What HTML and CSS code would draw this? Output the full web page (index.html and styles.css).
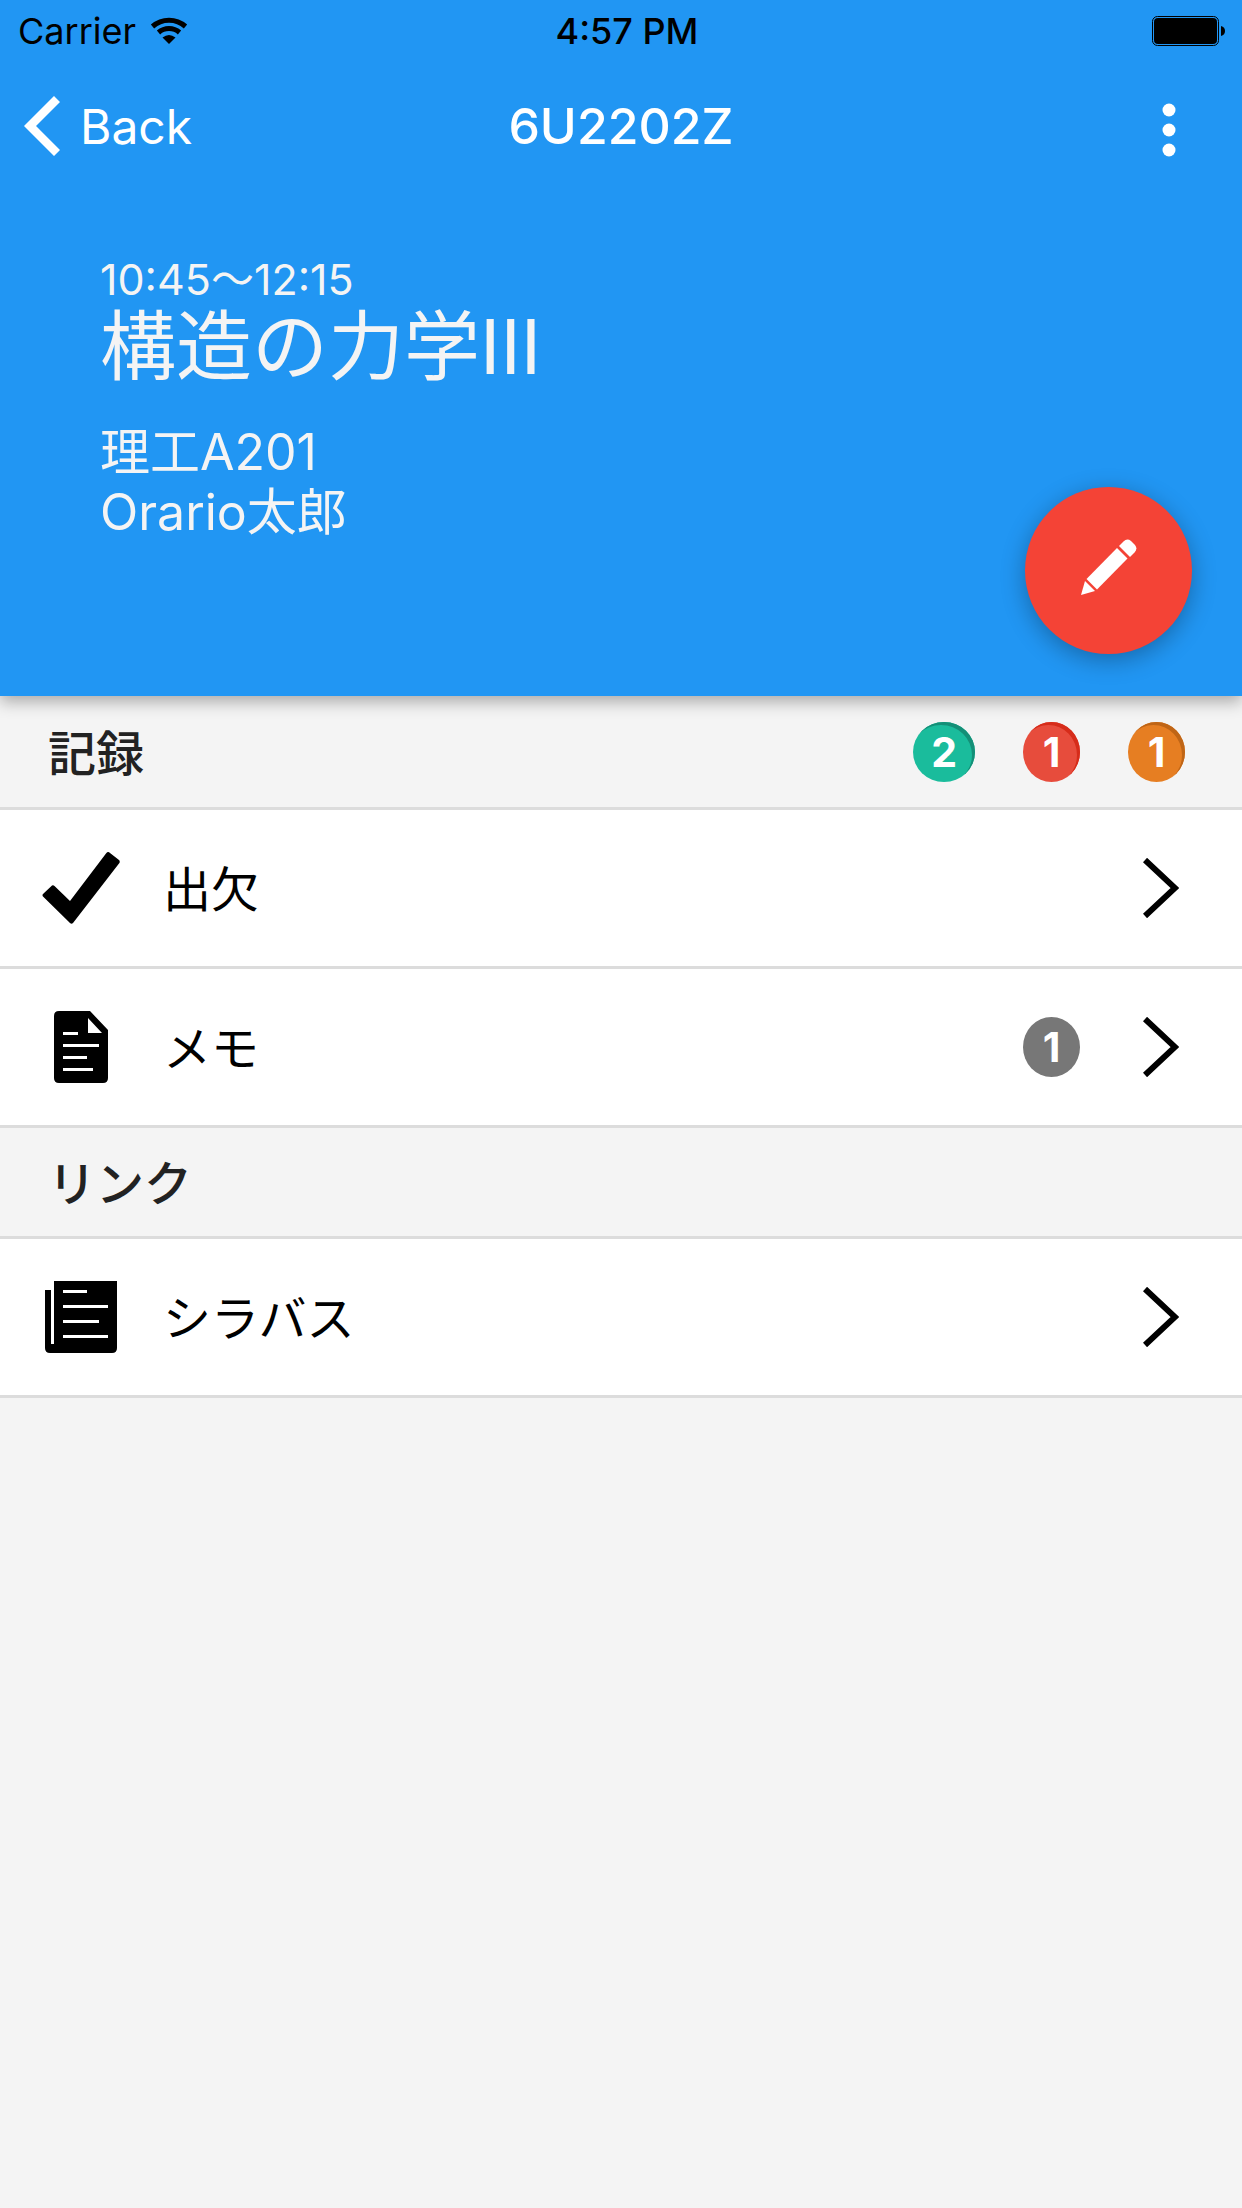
FILE: index.html
```html
<!DOCTYPE html>
<html lang="ja">
<head>
  <meta charset="utf-8">
  <meta name="viewport" content="width=device-width, initial-scale=1">
  <title>6U2202Z</title>
  <link rel="stylesheet" href="styles.css">
</head>
<body>
  <header class="hero">
    <div class="status-bar">
      <div class="carrier">
        <span>Carrier</span>
        <svg class="wifi" viewBox="0 0 38 28" aria-hidden="true">
          <path d="M2.500 9.500A25 25 0 0 1 35.500 9.500M8.500 15.500A16 16 0 0 1 29.500 15.500" fill="none" stroke="currentColor" stroke-width="5"/>
          <path d="M19 27L12.500 20.500Q19 15.500 25.500 20.500Z" fill="currentColor"/>
        </svg>
      </div>
      <span class="clock">4:57 PM</span>
      <svg class="battery" viewBox="0 0 74 30" aria-hidden="true">
        <rect x="0.500" y="0.500" width="66" height="29" rx="5" fill="none" stroke="currentColor"/>
        <rect x="2" y="2" width="63" height="26" rx="4" fill="currentColor"/>
        <path d="M69 10Q73 11 73 15T69 20Z" fill="currentColor"/>
      </svg>
    </div>

    <nav class="nav-bar">
      <button class="back" type="button">
        <svg class="back-icon" viewBox="0 0 36 60" aria-hidden="true">
          <path d="M33 3L6 30L33 57" fill="none" stroke="currentColor" stroke-width="8.500"/>
        </svg>
        <span>Back</span>
      </button>
      <h1 class="nav-title">6U2202Z</h1>
      <button class="more" type="button" aria-label="メニュー">
        <svg class="more-icon" viewBox="0 0 14 54" aria-hidden="true">
          <circle cx="7" cy="7" r="6.500"/><circle cx="7" cy="27" r="6.500"/><circle cx="7" cy="47" r="6.500"/>
        </svg>
      </button>
    </nav>

    <div class="course">
      <p class="course-time">10:45〜12:15</p>
      <h2 class="course-name">構造の力学III</h2>
      <p class="course-meta">理工A201<br>Orario太郎</p>
    </div>

    <button class="fab" type="button" aria-label="編集">
      <svg class="fab-icon" viewBox="0 0 56 56" aria-hidden="true">
        <path d="M0 56L4 42L14 52Z"/>
        <path d="M5.500 40L36 9L46.500 19.500L16 50.500Z"/>
        <path d="M38 7L42.500 2.500Q46-1 50 2L54 6Q57 10 53.500 13.500L49 18Z"/>
      </svg>
    </button>
  </header>

  <main>
    <section>
      <div class="section-head section-head-tall">
        <h2 class="section-title">記録</h2>
        <div class="badges">
          <span class="badge badge-present">2</span>
          <span class="badge badge-absent">1</span>
          <span class="badge badge-late">1</span>
        </div>
      </div>
      <a class="row" href="#attendance">
        <span class="row-icon">
          <svg class="icon-check" viewBox="0 0 78 72" aria-hidden="true">
            <path d="M1 42L10 33.500Q11.500 33 12.500 34L28 49L64 1.500Q66-1 68 1L77 8Q78.500 9.500 77 11.500L31 71Q29.500 72.500 28 71L1 44.500Q0 43 1 42Z"/>
          </svg>
        </span>
        <span class="row-label">出欠</span>
        <svg class="chevron" viewBox="0 0 36 60" aria-hidden="true"><path d="M2 2L32 30L2 58"/></svg>
      </a>
      <a class="row" href="#memo">
        <span class="row-icon">
          <svg class="icon-doc" viewBox="0 0 54 72" aria-hidden="true">
            <path fill-rule="evenodd" d="M5 0H36L54 19V67Q54 72 49 72H5Q0 72 0 67V5Q0 0 5 0ZM34 7V22H48ZM9 21V24H24V21ZM9 33V36H45V33ZM9 45V48H33V45ZM9 57V60H39V57Z"/>
          </svg>
        </span>
        <span class="row-label">メモ</span>
        <span class="badge badge-count">1</span>
        <svg class="chevron" viewBox="0 0 36 60" aria-hidden="true"><path d="M2 2L32 30L2 58"/></svg>
      </a>
    </section>

    <section>
      <div class="section-head">
        <h2 class="section-title">リンク</h2>
      </div>
      <a class="row" href="#syllabus">
        <span class="row-icon">
          <svg class="icon-book" viewBox="0 0 72 72" aria-hidden="true">
            <path fill-rule="evenodd" d="M9 0H72V67Q72 72 67 72H5Q0 72 0 67V9H6V63H9ZM18 9V12H42V9ZM18 24V27H63V24ZM18 39V42H54V39ZM18 54V57H63V54Z"/>
          </svg>
        </span>
        <span class="row-label">シラバス</span>
        <svg class="chevron" viewBox="0 0 36 60" aria-hidden="true"><path d="M2 2L32 30L2 58"/></svg>
      </a>
    </section>
  </main>
</body>
</html>
```
FILE: styles.css
```css
* {
  box-sizing: border-box;
}

body {
  margin: 0;
  min-height: 100vh;
  background: #f4f4f4;
  color: #000;
  font-family: Inter, "Noto Sans CJK JP", sans-serif;
}

h1,
h2,
p {
  margin: 0;
  font-weight: 400;
}

button {
  border: 0;
  padding: 0;
  background: none;
  color: inherit;
  font: inherit;
  cursor: pointer;
}

svg {
  display: block;
  flex: none;
}

/* Blue header */
.hero {
  position: relative;
  padding-bottom: 154px;
  background: #2196f3;
  color: #fff;
  box-shadow: 0 6px 15px rgba(0, 0, 0, 0.3);
}

.status-bar,
.nav-bar {
  display: grid;
  grid-template-columns: 1fr auto 1fr;
  align-items: center;
}

.status-bar {
  height: 62px;
  padding: 0 16px 0 18px;
  color: #000;
  font-size: 36px;
  line-height: 62px;
}

.carrier {
  display: flex;
  align-items: center;
  gap: 14px;
}

.wifi {
  width: 38px;
  height: 28px;
}

.clock {
  padding-left: 10px;
  font-weight: 500;
}

.battery {
  width: 74px;
  height: 30px;
  justify-self: end;
}

.nav-bar {
  height: 128px;
  padding: 0 24px;
}

.back {
  display: flex;
  align-items: center;
  justify-self: start;
  gap: 20px;
  font-size: 48px;
}

.back-icon {
  width: 36px;
  height: 60px;
}

.nav-title {
  font-size: 50px;
  font-weight: 500;
}

.more {
  justify-self: end;
  padding: 8px 42px 0 0;
}

.more-icon {
  width: 14px;
  height: 54px;
  fill: currentColor;
}

.course {
  padding: 62px 100px 0;
  color: #f4f4f4;
}

.course-time {
  font-size: 43px;
  line-height: 54px;
}

.course-name {
  font-size: 76px;
  line-height: 80px;
}

.course-meta {
  padding-top: 36px;
  font-size: 50px;
  line-height: 60px;
}

.fab {
  position: absolute;
  right: 50px;
  bottom: 42px;
  display: flex;
  align-items: center;
  justify-content: center;
  width: 167px;
  height: 167px;
  padding-bottom: 8px;
  border-radius: 50%;
  background: #f44336;
  box-shadow: 0 6px 24px rgba(0, 0, 0, 0.3);
}

.fab-icon {
  width: 56px;
  height: 56px;
  fill: #fff;
}

/* Lists */
.section-head {
  display: flex;
  align-items: center;
  justify-content: space-between;
  min-height: 111px;
  padding: 0 57px 0 48px;
  border-bottom: 3px solid #dcdcdc;
}

.section-head-tall {
  min-height: 114px;
}

.section-title {
  padding-top: 4px;
  color: #222;
  font-size: 48px;
  font-weight: 500;
  line-height: 60px;
}

.badges {
  display: flex;
  gap: 48px;
}

.badge {
  min-width: 57px;
  padding: 0 18px;
  border-radius: 50%;
  color: #fff;
  font-size: 41px;
  font-weight: 700;
  line-height: 60px;
  text-align: center;
}

.badge-present {
  background: #1abc9c;
  box-shadow: inset -3px 3px #148f77;
}

.badge-absent {
  background: #e74c3c;
  box-shadow: inset -3px 3px #d62c1a;
}

.badge-late {
  background: #e67e22;
  box-shadow: inset -3px 3px #bf6516;
}

.badge-count {
  margin-right: 63px;
  background: #777;
}

.row {
  display: flex;
  align-items: center;
  min-height: 159px;
  padding: 0 63px 0 42px;
  border-bottom: 3px solid #dcdcdc;
  background: #fff;
  color: #000;
  text-decoration: none;
}

.row-icon {
  display: flex;
  justify-content: center;
  width: 78px;
  margin-right: 43px;
}

.row-label {
  flex: 1;
  padding-top: 4px;
  font-size: 48px;
  line-height: 60px;
}

.icon-check {
  width: 78px;
  height: 72px;
}

.icon-doc {
  width: 54px;
  height: 72px;
}

.icon-book {
  width: 72px;
  height: 72px;
}

.chevron {
  width: 36px;
  height: 60px;
  fill: none;
  stroke: #000;
  stroke-width: 6px;
}
```
